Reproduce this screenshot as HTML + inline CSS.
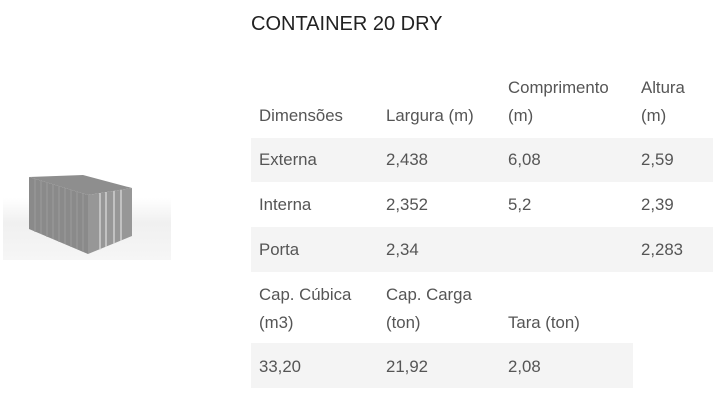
<!DOCTYPE html>
<html><head><meta charset="utf-8"><style>
body{margin:0;width:728px;height:406px;background:#fff;position:relative;overflow:hidden;font-family:"Liberation Sans",sans-serif;color:#555;font-size:16.8px}
.t{position:absolute;line-height:28px;white-space:nowrap}
.b{position:absolute;background:#f4f4f4}
h1{position:absolute;left:251px;top:10px;margin:0;font-size:20px;font-weight:normal;color:#222;line-height:28px}
</style></head><body>
<h1>CONTAINER 20 DRY</h1>
<div class="b" style="left:251px;top:138px;width:462px;height:44px"></div>
<div class="b" style="left:251px;top:227px;width:462px;height:45px"></div>
<div class="b" style="left:251px;top:343px;width:382px;height:45px"></div>

<div class="t" style="left:508px;top:74px">Comprimento</div>
<div class="t" style="left:641px;top:74px">Altura</div>
<div class="t" style="left:259px;top:102px">Dimensões</div>
<div class="t" style="left:386px;top:102px">Largura (m)</div>
<div class="t" style="left:508px;top:102px">(m)</div>
<div class="t" style="left:641px;top:102px">(m)</div>

<div class="t" style="left:259px;top:146px">Externa</div>
<div class="t" style="left:386px;top:146px">2,438</div>
<div class="t" style="left:508px;top:146px">6,08</div>
<div class="t" style="left:641px;top:146px">2,59</div>

<div class="t" style="left:259px;top:191px">Interna</div>
<div class="t" style="left:386px;top:191px">2,352</div>
<div class="t" style="left:508px;top:191px">5,2</div>
<div class="t" style="left:641px;top:191px">2,39</div>

<div class="t" style="left:259px;top:236px">Porta</div>
<div class="t" style="left:386px;top:236px">2,34</div>
<div class="t" style="left:641px;top:236px">2,283</div>

<div class="t" style="left:259px;top:281px">Cap. Cúbica</div>
<div class="t" style="left:386px;top:281px">Cap. Carga</div>
<div class="t" style="left:259px;top:309px">(m3)</div>
<div class="t" style="left:386px;top:309px">(ton)</div>
<div class="t" style="left:508px;top:309px">Tara (ton)</div>

<div class="t" style="left:259px;top:353px">33,20</div>
<div class="t" style="left:386px;top:353px">21,92</div>
<div class="t" style="left:508px;top:353px">2,08</div>

<svg style="position:absolute;left:0;top:0" width="200" height="406" viewBox="0 0 200 406">
<defs><linearGradient id="g" x1="0" x2="0" y1="0" y2="1"><stop offset="0" stop-color="#fff"/><stop offset="0.4" stop-color="#f0f0f0"/><stop offset="1" stop-color="#f6f6f6"/></linearGradient></defs>
<rect x="3" y="198" width="168" height="62" fill="url(#g)"/>
<polygon points="29,177 83,175 132,188 88,195" fill="#8e8e8e"/>
<polygon points="29,177 88,195 88,254 29,229" fill="#8a8a8a"/>
<polygon points="88,195 132,188 132,236 88,254" fill="#979797"/>
<g stroke="#9c9c9c" stroke-width="1">
<line x1="35" y1="179" x2="35" y2="232"/><line x1="41" y1="181" x2="41" y2="234"/><line x1="47" y1="183" x2="47" y2="237"/><line x1="53" y1="184" x2="53" y2="239"/><line x1="59" y1="186" x2="59" y2="242"/><line x1="65" y1="188" x2="65" y2="244"/><line x1="71" y1="190" x2="71" y2="247"/><line x1="77" y1="192" x2="77" y2="249"/><line x1="83" y1="193" x2="83" y2="252"/></g>
<g stroke="#e0e0e0" stroke-width="1.2">
<line x1="100" y1="193" x2="100" y2="250"/><line x1="106" y1="192" x2="106" y2="247"/><line x1="114" y1="191" x2="114" y2="244"/><line x1="121" y1="190" x2="121" y2="241"/></g>
</svg>
</body></html>
